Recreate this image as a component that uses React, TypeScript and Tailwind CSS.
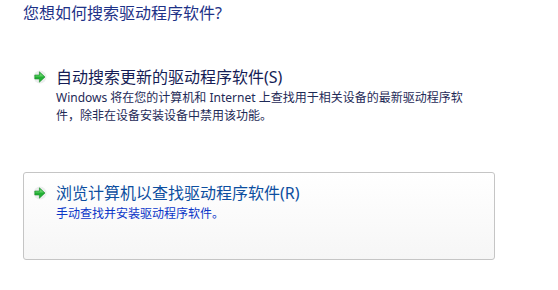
const FONT = "font-['Segoe_UI','Noto_Sans','Noto_Sans_CJK_SC',sans-serif]";

function GoArrow() {
  return (
    <svg width="14" height="14" viewBox="0 0 14 14" className="shrink-0">
      <circle cx="7" cy="7" r="6.5" fill="#eceeee" />
      <path
        d="M1.8 5 H6.4 V1.8 L12 7 L6.4 12.2 V9 H1.8 Z"
        fill="#22b034"
        stroke="#1a8a28"
        strokeWidth="0.6"
        strokeLinejoin="round"
      />
      <path d="M2.3 5.5 H6.9 V3 L10.9 6.6 H2.3 Z" fill="#86e486" opacity="0.6" />
    </svg>
  );
}

interface CommandLinkProps {
  title: string;
  desc: string[];
  hover?: boolean;
}

function CommandLink({ title, desc, hover }: CommandLinkProps) {
  return (
    <div
      className={
        "w-[472px] rounded-[3px] border pl-[9px] pr-3 pt-[9px] " +
        (hover
          ? "h-[88px] border-[#c5c5c5] bg-gradient-to-b from-white to-[#f6f6f6]"
          : "border-transparent pb-3")
      }
    >
      <div className="flex items-center gap-[9px] h-[22px]">
        <GoArrow />
        <span className={"text-[16px] leading-[22px] " + (hover ? "text-[#0c4ea0]" : "text-[#151c55]")}>
          {title}
        </span>
      </div>
      <div
        className={
          "pl-[23px] mt-[1px] text-[12px] leading-[18px] " + (hover ? "text-[#0a35c8]" : "text-[#1e2a57]")
        }
      >
        {desc.map((line) => (
          <div key={line}>{line}</div>
        ))}
      </div>
    </div>
  );
}

export default function App() {
  return (
    <div className={"w-[558px] h-[290px] bg-white " + FONT}>
      <div className="pl-[23px] pt-[3px] text-[16px] leading-[20px] text-[#1e3287]">
        您想如何搜索驱动程序软件?
      </div>
      <div className="pl-[23px] pt-[33px] flex flex-col gap-[34px]">
        <CommandLink
          title="自动搜索更新的驱动程序软件(S)"
          desc={[
            "Windows 将在您的计算机和 Internet 上查找用于相关设备的最新驱动程序软",
            "件，除非在设备安装设备中禁用该功能。",
          ]}
        />
        <CommandLink title="浏览计算机以查找驱动程序软件(R)" desc={["手动查找并安装驱动程序软件。"]} hover />
      </div>
    </div>
  );
}
